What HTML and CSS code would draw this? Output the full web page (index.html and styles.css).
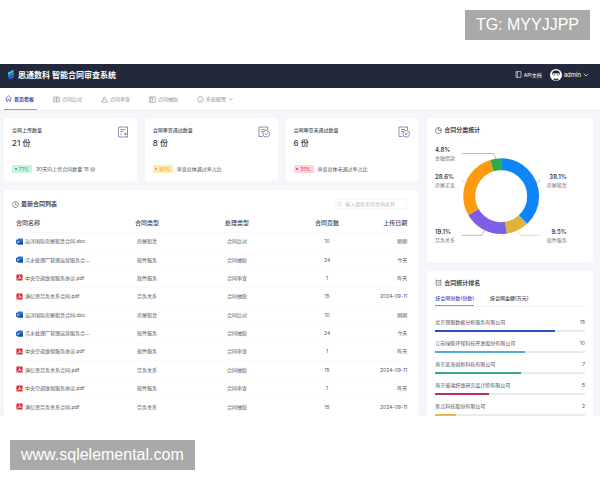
FILE: index.html
```html
<!DOCTYPE html>
<html>
<head>
<meta charset="utf-8">
<title>思通数科 智能合同审查系统</title>
<link rel="stylesheet" href="styles.css">
</head>
<body>
<div class="strip strip-top"><span class="tag">TG: MYYJJPP</span></div>

<div class="app">
  <header class="topbar">
    <div class="brand">
      <svg class="logo" viewBox="0 0 8 11"><path d="M1 3.5 6.5 .8v2.4L1 5.9z" fill="#58b4f5"/><path d="M1 6.3 7 3.4v2.4L1 8.6z" fill="#2b86e8"/><path d="M1.6 9 7 6.3v2L3 10.4z" fill="#2a6fd2"/></svg>
      <h1>思通数科 智能合同审查系统</h1>
    </div>
    <div class="account">
      <a class="api" href="#"><svg class="icon" viewBox="0 0 8 8"><path d="M1.2.7h5.6v6.6H1.2zM2.6.7v6.6" /></svg>API文档</a>
      <button class="user" type="button">
        <svg class="avatar" viewBox="0 0 12 12"><circle cx="6" cy="6" r="6" fill="#fff"/><path d="M2.3 6C1.7 2.7 4 1.3 6.2 1.5 9 1.5 10.4 3.6 9.6 6L8.5 4.3 5 4.5 3.3 4.2z" fill="#1d2233"/><path d="M3.400 6h1.800M6.800 6h1.800" stroke="#1d2233" stroke-width=".8"/><path d="M3 10.500 4.500 9.200 6 10l1.500-.8L9 10.500 6 11.700z" fill="#3b4052"/></svg>
        admin
        <svg class="chevron" viewBox="0 0 6 6"><path d="M.8 1.8 3 4 5.2 1.8"/></svg>
      </button>
    </div>
  </header>

  <nav class="nav">
    <a class="active" href="#"><svg class="icon" viewBox="0 0 8 8"><path d="M.6 4 4 .8 7.4 4M1.5 3.5v3.7h1.7V5h1.6v2.2h1.7V3.500"/></svg>首页看板</a>
    <a href="#"><svg class="icon" viewBox="0 0 8 8"><path d="M.8 1.2h6.4v5.6H.8zM4 1.2v5.6M1.8 3h1.2M5 3h1.2M1.8 4.8h1.2M5 4.8h1.2"/></svg>合同比对</a>
    <a href="#"><svg class="icon" viewBox="0 0 8 8"><path d="M2.8 2.3a1.2 1.2 0 1 1 2.4 0L4.7 4.3 7 5.2v1.900H1V5.2l2.3-.9z"/></svg>合同审查</a>
    <a href="#"><svg class="icon" viewBox="0 0 8 8"><path d="M.8 1h6.4v6.2H.8zM4 2.400v3.600M2.700 2.4h2.6M2 1v6.2"/></svg>合同抽取</a>
    <a href="#"><svg class="icon" viewBox="0 0 8 8"><path d="M2.3 1h3.4l1.7 3-1.7 3H2.3L.6 4z"/><path d="m2.8 4 1 1 1.5-1.7"/></svg>系统配置<svg class="chevron" viewBox="0 0 6 6"><path d="M1.5 2.3 3 3.8l1.5-1.5"/></svg></a>
  </nav>

  <main class="board">
    <div class="left">
      <div class="stats">
        <section class="card stat">
          <div><h2>合同上传数量</h2><p class="num">21 份</p></div>
          <svg class="stat-icon" viewBox="0 0 12 12"><path d="M1.5 1h9v10h-9zM3.5 3.5h5M3.5 5.5h3M3.5 8h1.5M7.2 8h2.6M8.5 6.700v2.6"/></svg>
          <p class="note"><span class="badge green">71%</span>30天内上传合同数量 15 份</p>
        </section>
        <section class="card stat">
          <div><h2>合同审查通过数量</h2><p class="num">8 份</p></div>
          <svg class="stat-icon" viewBox="0 0 12 12"><path d="M4.5 10.5h-3.5V1h8.5v3M3 3.5h4M3 5.5h2"/><circle cx="8.2" cy="7.8" r="3.3"/><path d="m6.7 7.8 1.1 1.1 1.9-2"/></svg>
          <p class="note"><span class="badge yellow">50%</span>审查总体通过率占比</p>
        </section>
        <section class="card stat">
          <div><h2>合同审查未通过数量</h2><p class="num">6 份</p></div>
          <svg class="stat-icon" viewBox="0 0 12 12"><path d="M4.5 10.5h-3.5V1h8.5v3M3 3.5h4M3 5.5h2"/><circle cx="8.2" cy="7.8" r="3.3"/><path d="m7 6.6 2.4 2.4m0-2.4L7 9"/></svg>
          <p class="note"><span class="badge red">31%</span>审查总体未通过率占比</p>
        </section>
      </div>

      <section class="card list">
        <div class="list-head">
          <h2 class="title"><svg class="icon" viewBox="0 0 8 8"><circle cx="4" cy="4" r="3.4"/><path d="M4 2v2.2h1.7"/></svg>最新合同列表</h2>
          <label class="search"><svg class="icon" viewBox="0 0 8 8"><circle cx="3.5" cy="3.5" r="2"/><path d="m5 5 1.5 1.5"/></svg><input type="text" placeholder="输入要检索的文档名称" aria-label="文档名称"></label>
        </div>
        <table>
          <colgroup><col class="c-name"><col class="c-mid"><col class="c-mid"><col class="c-mid"><col class="c-date"></colgroup>
          <thead><tr><th>合同名称</th><th>合同类型</th><th>处理类型</th><th>合同页数</th><th>上传日期</th></tr></thead>
          <tbody>
            <tr><td><span class="file doc">远洋国际房屋租赁合同.doc</span></td><td>房屋租赁</td><td>合同比对</td><td>10</td><td>刚刚</td></tr>
            <tr><td><span class="file doc">污水处理厂管理运营服务合...</span></td><td>软件服务</td><td>合同抽取</td><td>24</td><td>今天</td></tr>
            <tr><td><span class="file pdf">中央空调维保服务协议.pdf</span></td><td>软件服务</td><td>合同审查</td><td>1</td><td>昨天</td></tr>
            <tr><td><span class="file pdf">满亿思劳务关系合同.pdf</span></td><td>劳务关系</td><td>合同抽取</td><td>15</td><td>2024-09-11</td></tr>
            <tr><td><span class="file doc">远洋国际房屋租赁合同.doc</span></td><td>房屋租赁</td><td>合同比对</td><td>10</td><td>刚刚</td></tr>
            <tr><td><span class="file doc">污水处理厂管理运营服务合...</span></td><td>软件服务</td><td>合同抽取</td><td>24</td><td>今天</td></tr>
            <tr><td><span class="file pdf">中央空调维保服务协议.pdf</span></td><td>软件服务</td><td>合同审查</td><td>1</td><td>昨天</td></tr>
            <tr><td><span class="file pdf">满亿思劳务关系合同.pdf</span></td><td>劳务关系</td><td>合同抽取</td><td>15</td><td>2024-09-11</td></tr>
            <tr><td><span class="file pdf">中央空调维保服务协议.pdf</span></td><td>软件服务</td><td>合同审查</td><td>1</td><td>昨天</td></tr>
            <tr><td><span class="file pdf">满亿思劳务关系合同.pdf</span></td><td>劳务关系</td><td>合同抽取</td><td>15</td><td>2024-09-11</td></tr>
          </tbody>
        </table>
      </section>
    </div>

    <div class="right">
      <section class="card share">
        <h2 class="title"><svg class="icon" viewBox="0 0 8 8"><circle cx="4" cy="4" r="3.4"/><path d="M4 .6V4h3.4"/></svg>合同分类统计</h2>
        <svg class="donut" viewBox="0 0 150 100">
          <g class="ring" transform="rotate(-90 66.3 51.3)">
            <circle cx="66.3" cy="51.3" r="32" pathLength="1000" stroke="#0f86f8" stroke-dasharray="381 619"/>
            <circle cx="66.3" cy="51.3" r="32" pathLength="1000" stroke="#deb23c" stroke-dasharray="95 905" stroke-dashoffset="-381"/>
            <circle cx="66.3" cy="51.3" r="32" pathLength="1000" stroke="#7d5fe6" stroke-dasharray="191 809" stroke-dashoffset="-476"/>
            <circle cx="66.3" cy="51.3" r="32" pathLength="1000" stroke="#fd9a0e" stroke-dasharray="286 714" stroke-dashoffset="-667"/>
            <circle cx="66.3" cy="51.3" r="32" pathLength="1000" stroke="#2fa850" stroke-dasharray="47 953" stroke-dashoffset="-953"/>
          </g>
          <g class="leads">
            <path stroke="#2fa850" d="M27 8.5h32l2 6"/>
            <path stroke="#fd9a0e" d="m27 35.5 3 2"/>
            <path stroke="#0f86f8" d="m102.5 37 3-1.5"/>
            <path stroke="#7d5fe6" d="M27 90.5h20l2.5-5"/>
            <path stroke="#deb23c" d="m83 86.5 3 4h19"/>
          </g>
          <g class="pct">
            <text x="0" y="7">4.8%</text><text x="0" y="34">28.6%</text><text x="0" y="89">19.1%</text>
            <text class="end" x="132" y="34">38.1%</text><text class="end" x="132" y="89">9.5%</text>
          </g>
          <g class="kind">
            <text x="0" y="15">金融借款</text><text x="0" y="42">房屋买卖</text><text x="0" y="97">劳务关系</text>
            <text class="end" x="132" y="42">房屋租赁</text><text class="end" x="132" y="97">软件服务</text>
          </g>
        </svg>
      </section>

      <section class="card rank">
        <h2 class="title"><svg class="icon" viewBox="0 0 8 8"><path d="M1.3 2h5.4v5H1.3zM.6.8l1.2.8M7.4.8l-1.2.8M2.6 4l1.2 1.2L5.6 3.6"/></svg>合同统计排名</h2>
        <div class="tabs"><button class="on" type="button">按合同份数(份数)</button><button type="button">按合同金额(万元)</button></div>
        <ul>
          <li><span>北京慧眼数据分析服务有限公司</span><b>15</b><i class="bar"><i class="blue" style="width:80%"></i></i></li>
          <li><span>江苏绿能环保科技开发股份有限公司</span><b>10</b><i class="bar"><i class="sky" style="width:60%"></i></i></li>
          <li><span>南京蓝海创新科技有限公司</span><b>7</b><i class="bar"><i class="teal" style="width:57%"></i></i></li>
          <li><span>南京玻璃纤维研究设计院有限公司</span><b>5</b><i class="bar"><i class="rose" style="width:36%"></i></i></li>
          <li><span>焦点科技股份有限公司</span><b>2</b><i class="bar"><i class="gold" style="width:14%"></i></i></li>
        </ul>
      </section>
    </div>
  </main>
</div>

<div class="strip strip-bottom"><span class="tag">www.sqlelemental.com</span></div>

<script src="icons.js"></script>
</body>
</html>
```
FILE: icons.js
```js
const shapes = {
  doc: '<rect x="2" y="0.5" width="6" height="7" rx="0.5" fill="#2d7fd6"/><path d="M2 4h6v3.5H2z" fill="#174f9f"/><rect y="2" width="5" height="4.5" fill="#1c55ad"/><path d="m1 3 .7 2.3L2.5 3.4l.8 1.900L4 3" fill="none" stroke="#fff" stroke-width=".5"/>',
  pdf: '<rect x="0.5" y="0.5" width="7" height="7" rx="0.5" fill="#cf2f3a"/><path d="M1.8 6C3.5 5.2 4.3 3.2 3.9 1.9 3.7 3.7 5 4.9 6.3 4.8 4.7 4.3 3 4.8 1.8 6" fill="none" stroke="#fff" stroke-width=".7"/>'
};
document.querySelectorAll('.file').forEach((file) => {
  const kind = file.classList.contains('doc') ? 'doc' : 'pdf';
  file.insertAdjacentHTML('afterbegin', `<svg class="file-icon" viewBox="0 0 8 8">${shapes[kind]}</svg>`);
});
```
FILE: styles.css
```css
* { box-sizing: border-box; }

body {
  margin: 0;
  background: #fff;
  color: #50535c;
  font: 5px/8px Inter, "Noto Sans CJK SC", sans-serif;
}

h1, h2, p, ul { margin: 0; padding: 0; }
ul { list-style: none; }
a { color: inherit; text-decoration: none; }
button { border: 0; padding: 0; background: none; color: inherit; font: inherit; }
svg { flex: none; fill: none; stroke-width: 0.7; }

.icon { width: 7px; height: 7px; stroke: currentColor; }
.chevron { width: 6px; height: 6px; stroke: currentColor; }

.strip { display: flex; padding: 10px; }
.strip-top { justify-content: flex-end; padding-bottom: 24px; }
.strip-bottom { padding-top: 24px; }
.tag {
  padding: 0 11px;
  background: #a9a9a9;
  color: #fff;
  font: 16px/30px "Liberation Sans", sans-serif;
}

.app { background: #f5f6f9; }

.topbar {
  display: flex;
  justify-content: space-between;
  align-items: center;
  height: 24px;
  padding: 0 11px 3px 7px;
  background: #23283a;
  color: #fff;
}
.brand, .account, .api, .user { display: flex; align-items: center; }
.brand { gap: 3px; }
.logo { width: 8px; height: 11px; }
h1 { font-size: 8px; line-height: 12px; font-weight: 700; }
.account { gap: 8px; }
.api { gap: 2px; }
.user { gap: 2px; font-size: 6px; }
.avatar { width: 12px; height: 12px; }

.nav {
  display: grid;
  grid-template-columns: repeat(auto-fill, 48px);
  height: 23px;
  padding: 0 4px;
  background: #fff;
  border-bottom: 1px solid #eceef2;
  color: #8c8e95;
}
.nav a { display: flex; align-items: center; gap: 2px; justify-self: start; padding: 0 3px 0 1px; white-space: nowrap; }
.nav .active { color: #4743a5; font-weight: 700; border-bottom: 1px solid #9a9ba3; }

.board {
  display: grid;
  grid-template-columns: 5fr 2fr;
  gap: 9px;
  padding: 7px 7px 0 4px;
}
.left, .right { display: flex; flex-direction: column; gap: 9px; min-width: 0; }
.card { background: #fff; border-radius: 2px; }
.card h2 { font-size: 5px; line-height: 8px; font-weight: 500; color: #50535c; }
.card .title { display: flex; align-items: center; gap: 2px; font-size: 6px; font-weight: 700; color: #43464f; }

.stats { display: grid; grid-template-columns: repeat(3, 1fr); gap: 8px; }
.stat {
  display: grid;
  grid-template-columns: 1fr auto;
  align-content: space-between;
  padding: 8px;
}
.stat-icon { width: 12px; height: 12px; stroke: #625ea5; }
.num { padding-top: 3px; font-size: 8px; line-height: 12px; color: #363943; font-weight: 500; }
.note { grid-column: 1 / -1; display: flex; align-items: center; gap: 4px; padding-top: 16px; }
.badge { display: flex; align-items: center; justify-content: center; gap: 2px; width: 20px; border-radius: 1px; }
.badge::before { content: ""; width: 2px; height: 2px; border-radius: 1px; background: currentColor; }
.green { background: #c5f4e0; color: #3f9d79; }
.yellow { background: #ffebb0; color: #dba32c; }
.red { background: #ffd2dc; color: #c64765; }

.list { flex: 1; display: flex; flex-direction: column; padding: 8px 11px 0 8px; }
.list-head { display: flex; justify-content: space-between; align-items: center; height: 12px; margin-bottom: 4px; }
.search { display: flex; align-items: center; gap: 2px; width: 72px; height: 10px; border: 1px solid #f8f8fa; color: #c4c6cc; }
.search input { flex: 1; min-width: 0; border: 0; padding: 0; background: none; font: inherit; line-height: 8px; }
.search input::placeholder { color: #b9bbc2; }

table { flex: 1; margin-left: 4px; table-layout: fixed; border-collapse: collapse; }
.list table { width: calc(100% - 4px); }
.c-name { width: 22%; }
.c-mid { width: 23%; }
.c-date { width: 9%; }
th, td { height: 18px; padding: 0; text-align: center; white-space: nowrap; }
th { font-size: 6px; font-weight: 500; color: #43464f; }
td { border-top: 1px solid #fafafc; }
th:first-child, td:first-child { text-align: left; }
th:last-child, td:last-child { text-align: right; }
.file { display: flex; align-items: center; gap: 2px; }
.file-icon { width: 7px; height: 7px; }

.share, .rank { padding: 8px 8px 0; }
.share { padding-bottom: 17px; }
.donut { display: block; width: 100%; margin-top: 11px; }
.ring { stroke-width: 12; }
.leads { stroke-width: 0.5; }
.pct { font-size: 6px; font-weight: 600; fill: #363943; }
.kind { font-size: 5px; fill: #70737c; }
.end { text-anchor: end; }

.tabs { display: flex; gap: 16px; margin-top: 7px; border-bottom: 1px solid #f4f4f7; }
.tabs button { padding-bottom: 3px; font-weight: 500; color: #43464f; }
.tabs .on { color: #5450c0; border-bottom: 1px solid #8f8dba; }
.rank ul { display: grid; gap: 7px; margin-top: 11px; }
.rank li { display: grid; grid-template-columns: 1fr auto; row-gap: 4px; }
.rank b { font-weight: 400; }
.bar { grid-column: 1 / -1; height: 2px; background: #e9eaee; }
.bar i { display: block; height: 2px; }
.blue { background: #2c50b8; }
.sky { background: #4cacd4; }
.teal { background: #38a988; }
.rose { background: #b83460; }
.gold { background: #e8b84c; }
```
